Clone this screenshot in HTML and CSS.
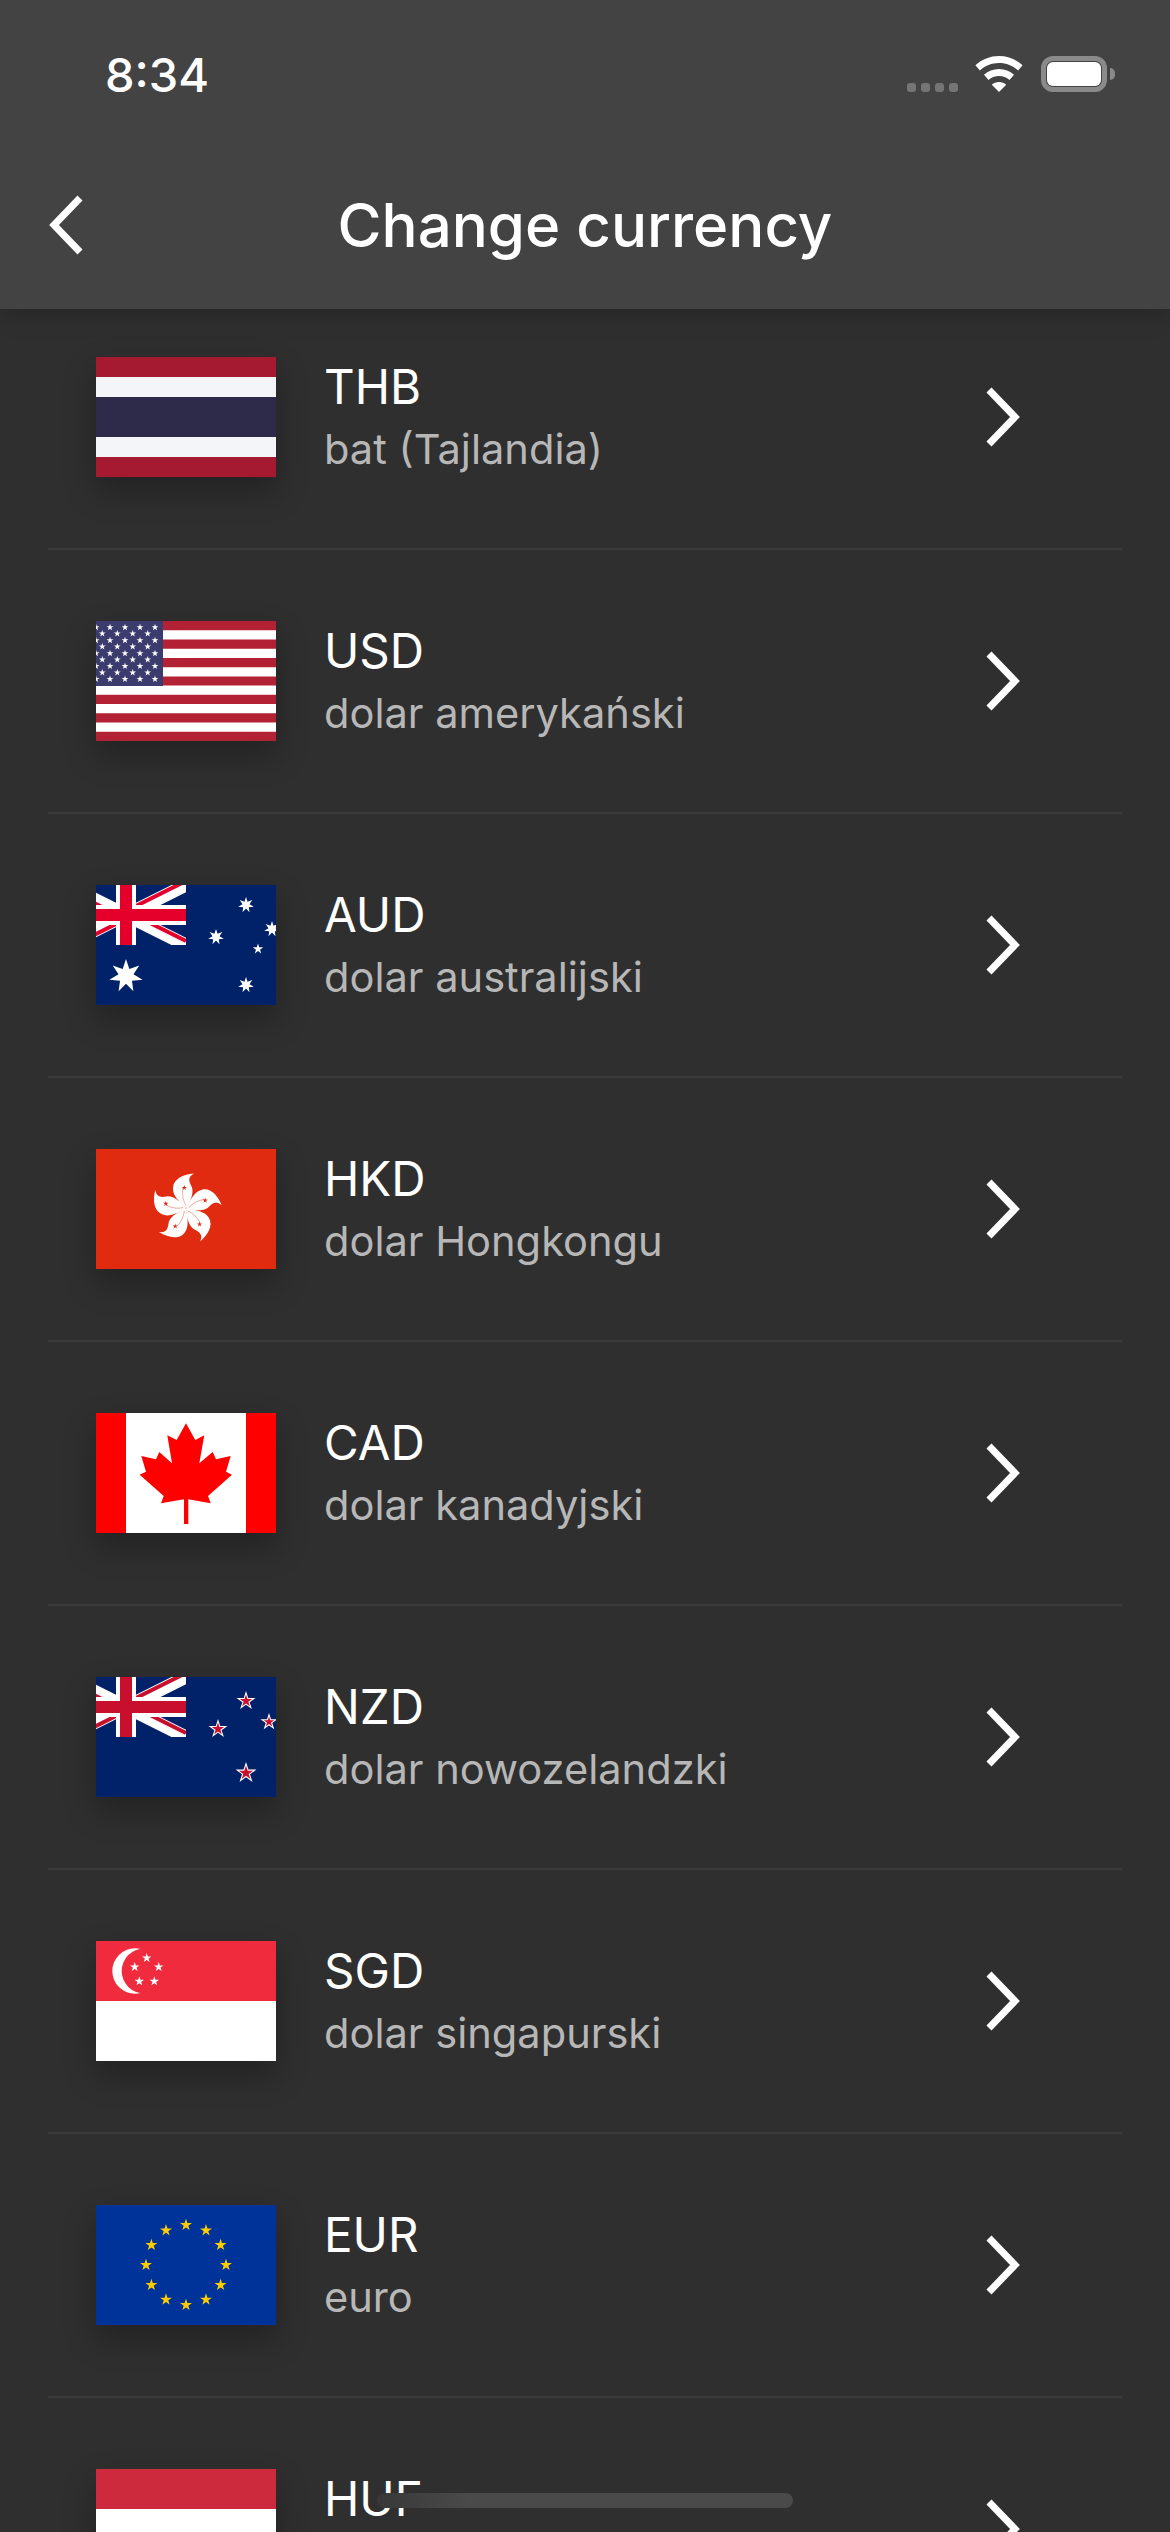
FILE: index.html
```html
<!DOCTYPE html>
<html lang="pl">
<head>
<meta charset="utf-8">
<title>Change currency</title>
<link rel="stylesheet" href="styles.css">
</head>
<body>
<div class="screen">
  <header class="header">
    <div class="status">
      <span class="time">8:34</span>
      <div class="status-icons">
        <div class="signal"><i></i><i></i><i></i><i></i></div>
        <svg class="wifi" width="48" height="36" viewBox="0 0 48 36"><path d="M24 0C15 0 6.8 3.4 0.4 9.2l4.5 5.2C10 9.7 16.7 7 24 7s14 2.7 19.100 7.400l4.500-5.200C41.200 3.400 33 0 24 0z M24 13c-5.700 0-11 2.100-15 5.800l4.500 5.200c2.800-2.500 6.500-4 10.500-4s7.700 1.500 10.500 4l4.500-5.200C35 15.100 29.700 13 24 13z M24 26c-2.800 0-5.300 1-7.200 2.700L24 36l7.200-7.300C29.300 27 26.800 26 24 26z" fill="#fff"/></svg>
        <div class="battery"><div class="battery-fill"></div></div>
      </div>
    </div>
    <nav class="nav">
      <svg class="back" width="36" height="60" viewBox="0 0 36 60"><path d="M32 3 L6 30 L32 57" class="chev"/></svg>
      <h1 class="title">Change currency</h1>
      <span class="nav-spacer"></span>
    </nav>
  </header>

  <main class="list">
    <div class="row">
      <svg class="flag" viewBox="0 0 180 120"><rect width="180" height="120" fill="#a51931"/><rect y="20" width="180" height="80" fill="#f4f5f8"/><rect y="40" width="180" height="40" fill="#2d2a4a"/></svg>
      <div class="text"><div class="code">THB</div><div class="name">bat (Tajlandia)</div></div>
      <svg class="arrow" width="36" height="60" viewBox="0 0 36 60"><path d="M4 3 L30 30 L4 57" class="chev"/></svg>
    </div>

    <div class="row">
      <svg class="flag" viewBox="0 0 180 120">
        <defs>
          <polygon id="s5" points="0,-1 .225,-.309 .951,-.309 .363,.118 .588,.809 0,.382 -.588,.809 -.363,.118 -.951,-.309 -.225,-.309"/>
          <polygon id="s7" points="0,-1 .195,-.405 .782,-.623 .439,-.1 .975,.223 .352,.281 .434,.901 0,.45 -.434,.901 -.352,.281 -.975,.223 -.439,-.1 -.782,-.623 -.195,-.405"/>
          <g id="usrow-a" fill="#fff"><use href="#s5" transform="translate(0 0) scale(3.6)"/><use href="#s5" transform="translate(14 0) scale(3.6)"/><use href="#s5" transform="translate(29 0) scale(3.6)"/><use href="#s5" transform="translate(44 0) scale(3.6)"/><use href="#s5" transform="translate(59 0) scale(3.6)"/></g>
          <g id="usrow-b" fill="#fff"><use href="#s5" transform="translate(6.300 0) scale(3.6)"/><use href="#s5" transform="translate(21.300 0) scale(3.6)"/><use href="#s5" transform="translate(36.700 0) scale(3.6)"/><use href="#s5" transform="translate(51.700 0) scale(3.6)"/></g>
          <g id="petal">
            <path d="M0 0C-6 -6 -14 -13 -13 -21C-12 -30 -3 -34 8 -35C1 -31 3 -27 6 -21C8 -15 4 -6 0 0Z" fill="#fff"/>
            <path d="M0 -3C-3 -8 -4 -14 -3 -20" fill="none" stroke="#e98a78" stroke-width=".7"/>
            <use href="#s5" transform="translate(-1.700 -20.700) scale(2.8)" fill="#de2910"/>
          </g>
          <g id="jack-white">
            <path d="M-30 0L90 60M-30 60L90 0" stroke="#fff" stroke-width="13" fill="none"/>
          </g>
        </defs>
        <rect width="180" height="120" fill="#fff"/>
        <path d="M0 0H180V9.230H0zM0 18.460H180V27.690H0zM0 36.920H180V46.150H0zM0 55.380H180V64.610H0zM0 73.850H180V83.080H0zM0 92.310H180V101.540H0zM0 110.770H180V120H0z" fill="#b22234"/>
        <rect width="67" height="65" fill="#3c3b6e"/>
        <use href="#usrow-a" y="6.300"/><use href="#usrow-b" y="12.700"/><use href="#usrow-a" y="19.300"/><use href="#usrow-b" y="25.700"/><use href="#usrow-a" y="32.300"/><use href="#usrow-b" y="38.700"/><use href="#usrow-a" y="45"/><use href="#usrow-b" y="51.700"/><use href="#usrow-a" y="58"/>
      </svg>
      <div class="text"><div class="code">USD</div><div class="name">dolar amerykański</div></div>
      <svg class="arrow" width="36" height="60" viewBox="0 0 36 60"><path d="M4 3 L30 30 L4 57" class="chev"/></svg>
    </div>

    <div class="row">
      <svg class="flag" viewBox="0 0 180 120">
        <rect width="180" height="120" fill="#012169"/>
        <svg width="90" height="60" viewBox="0 0 90 60">
          <use href="#jack-white"/>
          <path d="M30 26L90 -4M30 26L90 56M30 34L-30 4M30 34L-30 64" stroke="#e4002b" stroke-width="4" fill="none"/>
          <rect x="20" width="20" height="60" fill="#fff"/><rect y="20" width="90" height="20" fill="#fff"/>
          <rect x="24" width="12" height="60" fill="#e4002b"/><rect y="24" width="90" height="12" fill="#e4002b"/>
        </svg>
        <g fill="#fff">
          <use href="#s7" transform="translate(30 91) scale(17)"/>
          <use href="#s7" transform="translate(150 20) scale(8)"/>
          <use href="#s7" transform="translate(120 52) scale(8)"/>
          <use href="#s7" transform="translate(176 44) scale(8)"/>
          <use href="#s5" transform="translate(162 64) scale(5.500)"/>
          <use href="#s7" transform="translate(150 100) scale(8)"/>
        </g>
      </svg>
      <div class="text"><div class="code">AUD</div><div class="name">dolar australijski</div></div>
      <svg class="arrow" width="36" height="60" viewBox="0 0 36 60"><path d="M4 3 L30 30 L4 57" class="chev"/></svg>
    </div>

    <div class="row">
      <svg class="flag" viewBox="0 0 180 120">
        <rect width="180" height="120" fill="#e02b10"/>
        <g transform="translate(90 59.500)">
          <use href="#petal"/><use href="#petal" transform="rotate(72)"/><use href="#petal" transform="rotate(144)"/><use href="#petal" transform="rotate(216)"/><use href="#petal" transform="rotate(288)"/>
        </g>
      </svg>
      <div class="text"><div class="code">HKD</div><div class="name">dolar Hongkongu</div></div>
      <svg class="arrow" width="36" height="60" viewBox="0 0 36 60"><path d="M4 3 L30 30 L4 57" class="chev"/></svg>
    </div>

    <div class="row">
      <svg class="flag" viewBox="0 0 180 120">
        <rect width="180" height="120" fill="#fff"/>
        <rect width="30" height="120" fill="#f00"/><rect x="150" width="30" height="120" fill="#f00"/>
        <polygon fill="#f00" points="90,10.300 99.300,27 108.300,22.300 103.300,50.300 116.700,39 120,46.300 134.700,43 130,58.700 136,61.700 112,83 114.700,90.300 92.300,86.300 92.300,111 88,111 88,86.300 65,90.300 67.700,83 43.700,61.700 50,58.700 45.300,43 60,46.300 63.300,39 76,50.300 71.300,22.300 80.700,27"/>
      </svg>
      <div class="text"><div class="code">CAD</div><div class="name">dolar kanadyjski</div></div>
      <svg class="arrow" width="36" height="60" viewBox="0 0 36 60"><path d="M4 3 L30 30 L4 57" class="chev"/></svg>
    </div>

    <div class="row">
      <svg class="flag" viewBox="0 0 180 120">
        <rect width="180" height="120" fill="#012169"/>
        <svg width="90" height="60" viewBox="0 0 90 60">
          <use href="#jack-white"/>
          <path d="M30 26L90 -4M30 26L90 56M30 34L-30 4M30 34L-30 64" stroke="#c8102e" stroke-width="4" fill="none"/>
          <rect x="20" width="20" height="60" fill="#fff"/><rect y="20" width="90" height="20" fill="#fff"/>
          <rect x="24" width="12" height="60" fill="#c8102e"/><rect y="24" width="90" height="12" fill="#c8102e"/>
        </svg>
        <g fill="#fff">
          <use href="#s5" transform="translate(150 24) scale(10)"/>
          <use href="#s5" transform="translate(122 52) scale(10)"/>
          <use href="#s5" transform="translate(173 45) scale(9)"/>
          <use href="#s5" transform="translate(150 96) scale(11)"/>
        </g>
        <g fill="#c8102e">
          <use href="#s5" transform="translate(150 24) scale(6.500)"/>
          <use href="#s5" transform="translate(122 52) scale(6.500)"/>
          <use href="#s5" transform="translate(173 45) scale(5.500)"/>
          <use href="#s5" transform="translate(150 96) scale(7.500)"/>
        </g>
      </svg>
      <div class="text"><div class="code">NZD</div><div class="name">dolar nowozelandzki</div></div>
      <svg class="arrow" width="36" height="60" viewBox="0 0 36 60"><path d="M4 3 L30 30 L4 57" class="chev"/></svg>
    </div>

    <div class="row">
      <svg class="flag" viewBox="0 0 180 120">
        <rect width="180" height="120" fill="#fff"/>
        <rect width="180" height="60" fill="#ef2b3d"/>
        <circle cx="39" cy="30" r="22.700" fill="#fff"/>
        <circle cx="48.200" cy="30" r="22.500" fill="#ef2b3d"/>
        <g fill="#fff">
          <use href="#s5" transform="translate(50.700 17) scale(5)"/>
          <use href="#s5" transform="translate(38.700 26) scale(5)"/>
          <use href="#s5" transform="translate(62.700 26) scale(5)"/>
          <use href="#s5" transform="translate(43.300 40.300) scale(5)"/>
          <use href="#s5" transform="translate(58.300 40.300) scale(5)"/>
        </g>
      </svg>
      <div class="text"><div class="code">SGD</div><div class="name">dolar singapurski</div></div>
      <svg class="arrow" width="36" height="60" viewBox="0 0 36 60"><path d="M4 3 L30 30 L4 57" class="chev"/></svg>
    </div>

    <div class="row">
      <svg class="flag" viewBox="0 0 180 120">
        <rect width="180" height="120" fill="#039"/>
        <g fill="#fc0">
          <use href="#s5" transform="translate(90 20) scale(6.300)"/>
          <use href="#s5" transform="translate(110 25.400) scale(6.300)"/>
          <use href="#s5" transform="translate(124.600 40) scale(6.300)"/>
          <use href="#s5" transform="translate(130 60) scale(6.300)"/>
          <use href="#s5" transform="translate(124.600 80) scale(6.300)"/>
          <use href="#s5" transform="translate(110 94.600) scale(6.300)"/>
          <use href="#s5" transform="translate(90 100) scale(6.300)"/>
          <use href="#s5" transform="translate(70 94.600) scale(6.300)"/>
          <use href="#s5" transform="translate(55.400 80) scale(6.300)"/>
          <use href="#s5" transform="translate(50 60) scale(6.300)"/>
          <use href="#s5" transform="translate(55.400 40) scale(6.300)"/>
          <use href="#s5" transform="translate(70 25.400) scale(6.300)"/>
        </g>
      </svg>
      <div class="text"><div class="code">EUR</div><div class="name">euro</div></div>
      <svg class="arrow" width="36" height="60" viewBox="0 0 36 60"><path d="M4 3 L30 30 L4 57" class="chev"/></svg>
    </div>

    <div class="row">
      <svg class="flag" viewBox="0 0 180 120">
        <rect width="180" height="120" fill="#fff"/>
        <rect width="180" height="40" fill="#cd2a3e"/>
        <rect y="80" width="180" height="40" fill="#436f4d"/>
      </svg>
      <div class="text"><div class="code">HUF</div><div class="name">forint węgierski</div></div>
      <svg class="arrow" width="36" height="60" viewBox="0 0 36 60"><path d="M4 3 L30 30 L4 57" class="chev"/></svg>
    </div>
  </main>

  <div class="home-bar"></div>
</div>
</body>
</html>
```
FILE: styles.css
```css
* { box-sizing: border-box; }
html, body { margin: 0; padding: 0; background: #2f2f2f; }
.screen {
  position: relative;
  width: 1170px;
  height: 2532px;
  overflow: hidden;
  background: #2f2f2f;
  font-family: Inter, "Liberation Sans", sans-serif;
  color: #fff;
}
.header {
  position: absolute;
  top: 0;
  left: 0;
  right: 0;
  z-index: 2;
  height: 309px;
  background: #434343;
  box-shadow: 0 4px 24px rgba(0, 0, 0, .22);
}
.status {
  display: flex;
  justify-content: space-between;
  align-items: flex-start;
  height: 195px;
  padding: 55px 63px 0 105px;
}
.time { font-size: 47px; font-weight: 500; line-height: 40px; }
.status-icons { display: flex; align-items: flex-end; height: 37px; }
.signal { display: flex; gap: 5px; margin-right: 17px; }
.signal i { width: 9px; height: 9px; border-radius: 3px; background: #757575; display: block; }
.wifi { margin-right: 18px; display: block; }
.battery {
  position: relative;
  width: 66px;
  height: 36px;
  border: 5px solid #8a8a8a;
  border-radius: 12px;
  background: #434343;
  padding: 1px;
}
.battery::after {
  content: "";
  position: absolute;
  left: 64px;
  top: 7px;
  width: 5px;
  height: 12px;
  background: #8a8a8a;
  border-radius: 0 5px 5px 0;
}
.battery-fill { width: 100%; height: 100%; background: #fff; border-radius: 6px; }
.nav {
  display: grid;
  grid-template-columns: 1fr auto 1fr;
  align-items: center;
  padding: 0 48px;
  height: 60px;
}
.back { display: block; }
.title { margin: 0; font-size: 60px; font-weight: 500; line-height: 60px; white-space: nowrap; }
.chev { fill: none; stroke: #fff; stroke-width: 7; }
.list { padding-top: 286px; }
.row {
  display: flex;
  align-items: center;
  height: 264px;
  margin: 0 48px;
  padding: 0 53px 0 48px;
  border-bottom: 2px solid #3a3a3a;
}
.flag {
  display: block;
  width: 180px;
  height: 120px;
  flex: none;
  box-shadow: 0 14px 30px rgba(0, 0, 0, .28);
}
.text { flex: 1; margin-left: 48px; min-width: 0; padding-top: 2px; }
.code { font-size: 47.5px; line-height: 60px; font-weight: 400; }
.name { font-size: 41.6px; line-height: 60px; margin-top: 2px; color: #b7b7b7; }
.arrow { display: block; flex: none; margin-right: 48px; }
.home-bar {
  position: absolute;
  left: 377px;
  top: 2493px;
  width: 416px;
  height: 15px;
  border-radius: 8px;
  background: linear-gradient(90deg, #383838, #4a4a4a 22%);
}
```
